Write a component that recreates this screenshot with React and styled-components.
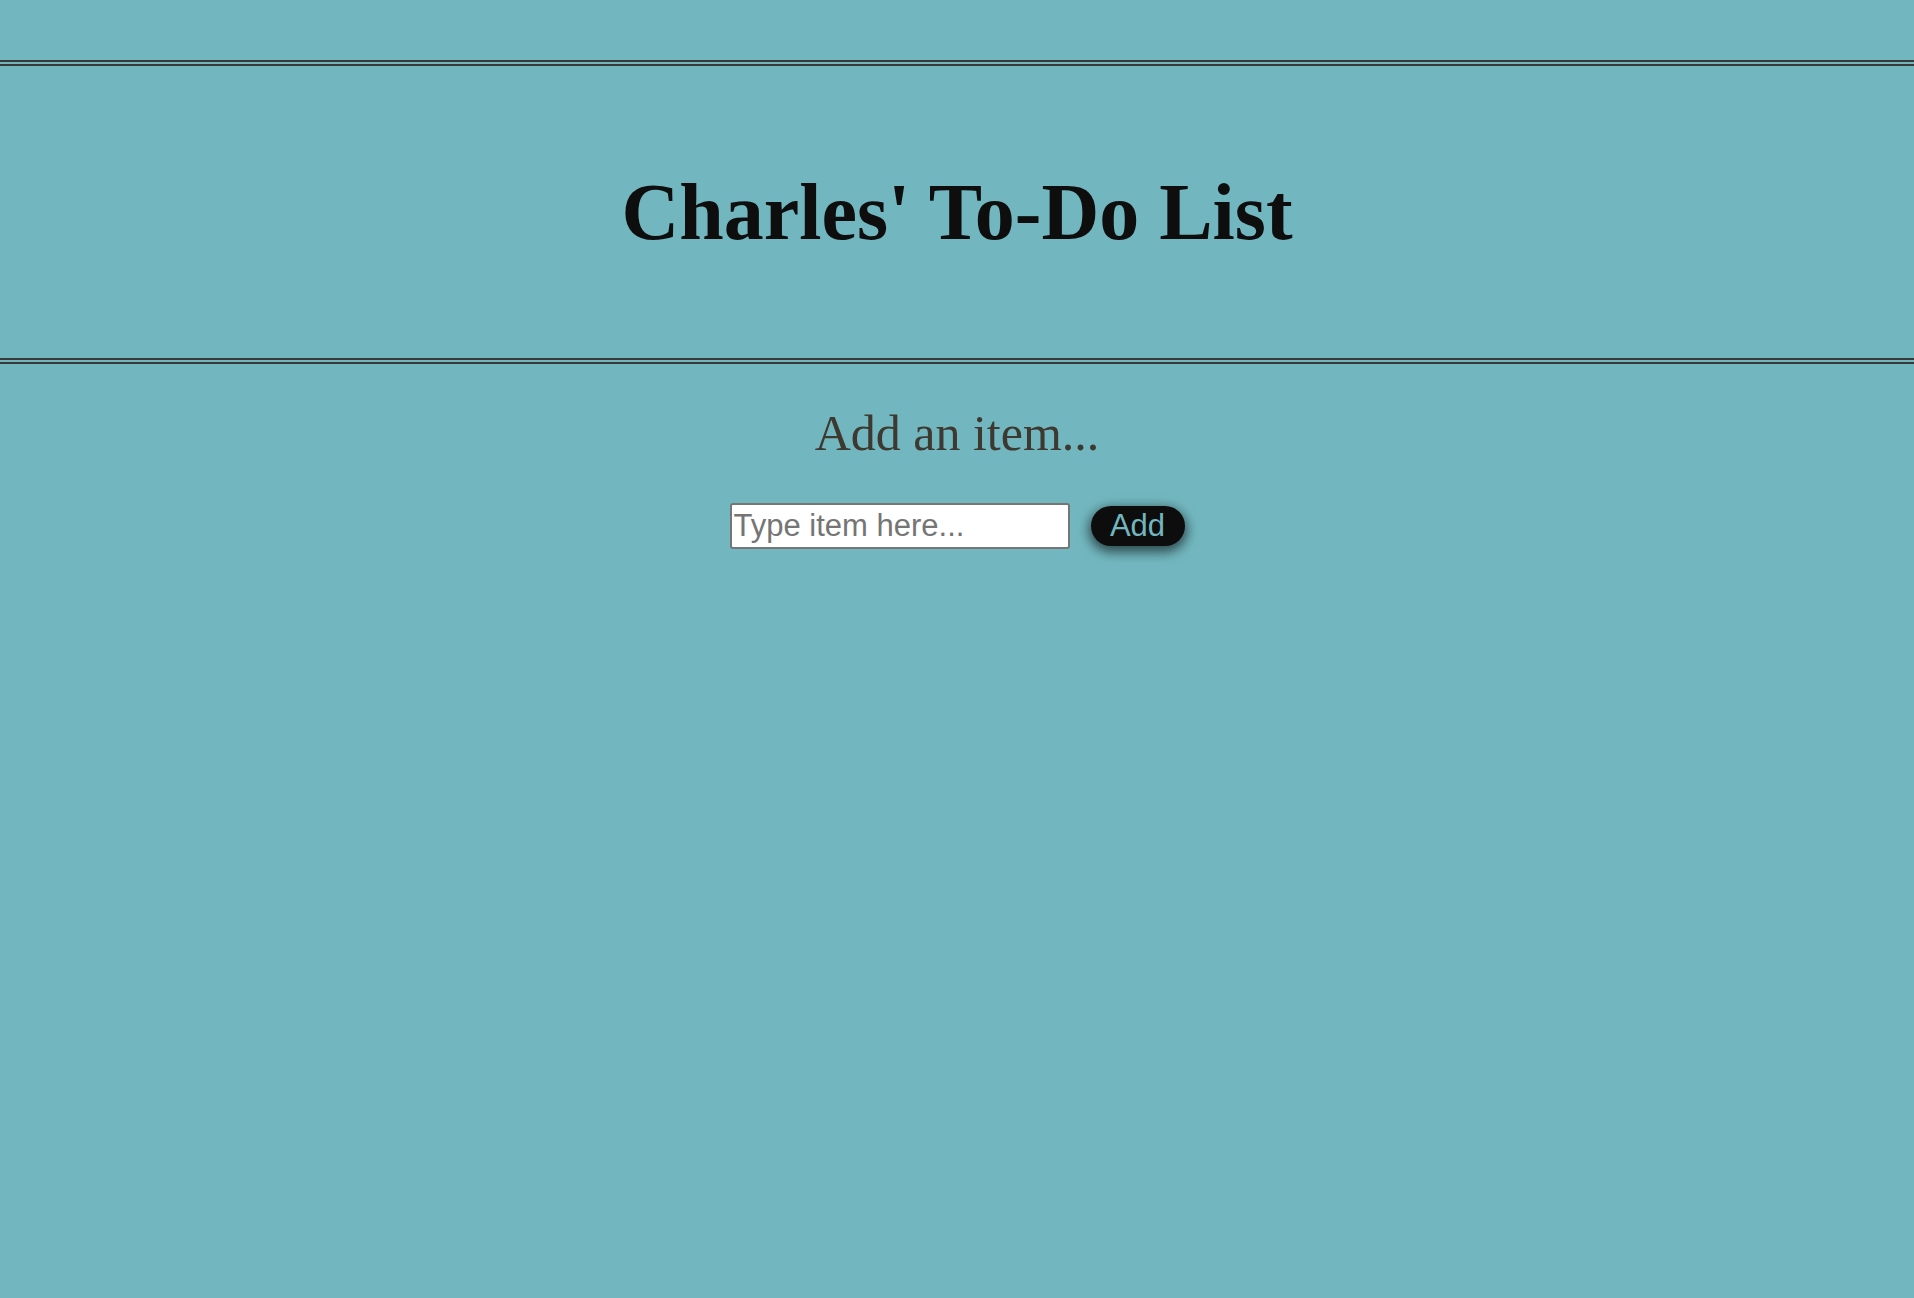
import styled, { createGlobalStyle } from "styled-components";

const GlobalStyle = createGlobalStyle`
  html, body {
    margin: 0;
    padding: 0;
    background-color: #72b7bf;
    min-height: 100%;
  }
  body {
    font-family: "Liberation Serif", "Times New Roman", serif;
  }
`;

const Page = styled.div`
  min-height: 1298px;
  padding-top: 60px;
  box-sizing: border-box;
`;

const Header = styled.header`
  height: 292px;
  border-top: 6px double #393a36;
  border-bottom: 6px double #393a36;
  display: flex;
  align-items: center;
  justify-content: center;
`;

const Title = styled.h1`
  margin: 0;
  font-size: 80px;
  font-weight: 700;
  color: #0e0e0e;
  line-height: normal;
`;

const Subtitle = styled.h2`
  margin: 40px 0 0;
  font-size: 50px;
  font-weight: 400;
  color: #3d3830;
  text-align: center;
  line-height: normal;
`;

const Form = styled.form`
  margin-top: 41px;
  display: flex;
  align-items: center;
  justify-content: center;
  gap: 21px;
`;

const ItemInput = styled.input`
  width: 340px;
  height: 46px;
  box-sizing: border-box;
  border: 2px solid #767676;
  border-radius: 3px;
  padding: 1px 2px;
  background: #fff;
  font-family: "Liberation Sans", Arial, sans-serif;
  font-size: 31px;
  color: #111;
  outline: none;

  &::placeholder {
    color: #757575;
  }
`;

const AddButton = styled.button`
  width: 94px;
  height: 40px;
  border: none;
  border-radius: 20px;
  background-color: #0d0d0d;
  color: #72b7bf;
  font-family: "Liberation Sans", Arial, sans-serif;
  font-size: 31px;
  line-height: 40px;
  padding: 0;
  cursor: pointer;
  box-shadow: 0 4px 12px 2px rgba(0, 0, 0, 0.6);
`;

function App() {
  const handleSubmit = (e) => {
    e.preventDefault();
  };

  return (
    <Page>
      <GlobalStyle />
      <Header>
        <Title>Charles' To-Do List</Title>
      </Header>
      <Subtitle>Add an item...</Subtitle>
      <Form onSubmit={handleSubmit}>
        <ItemInput type="text" placeholder="Type item here..." />
        <AddButton type="submit">Add</AddButton>
      </Form>
    </Page>
  );
}

export default App;
